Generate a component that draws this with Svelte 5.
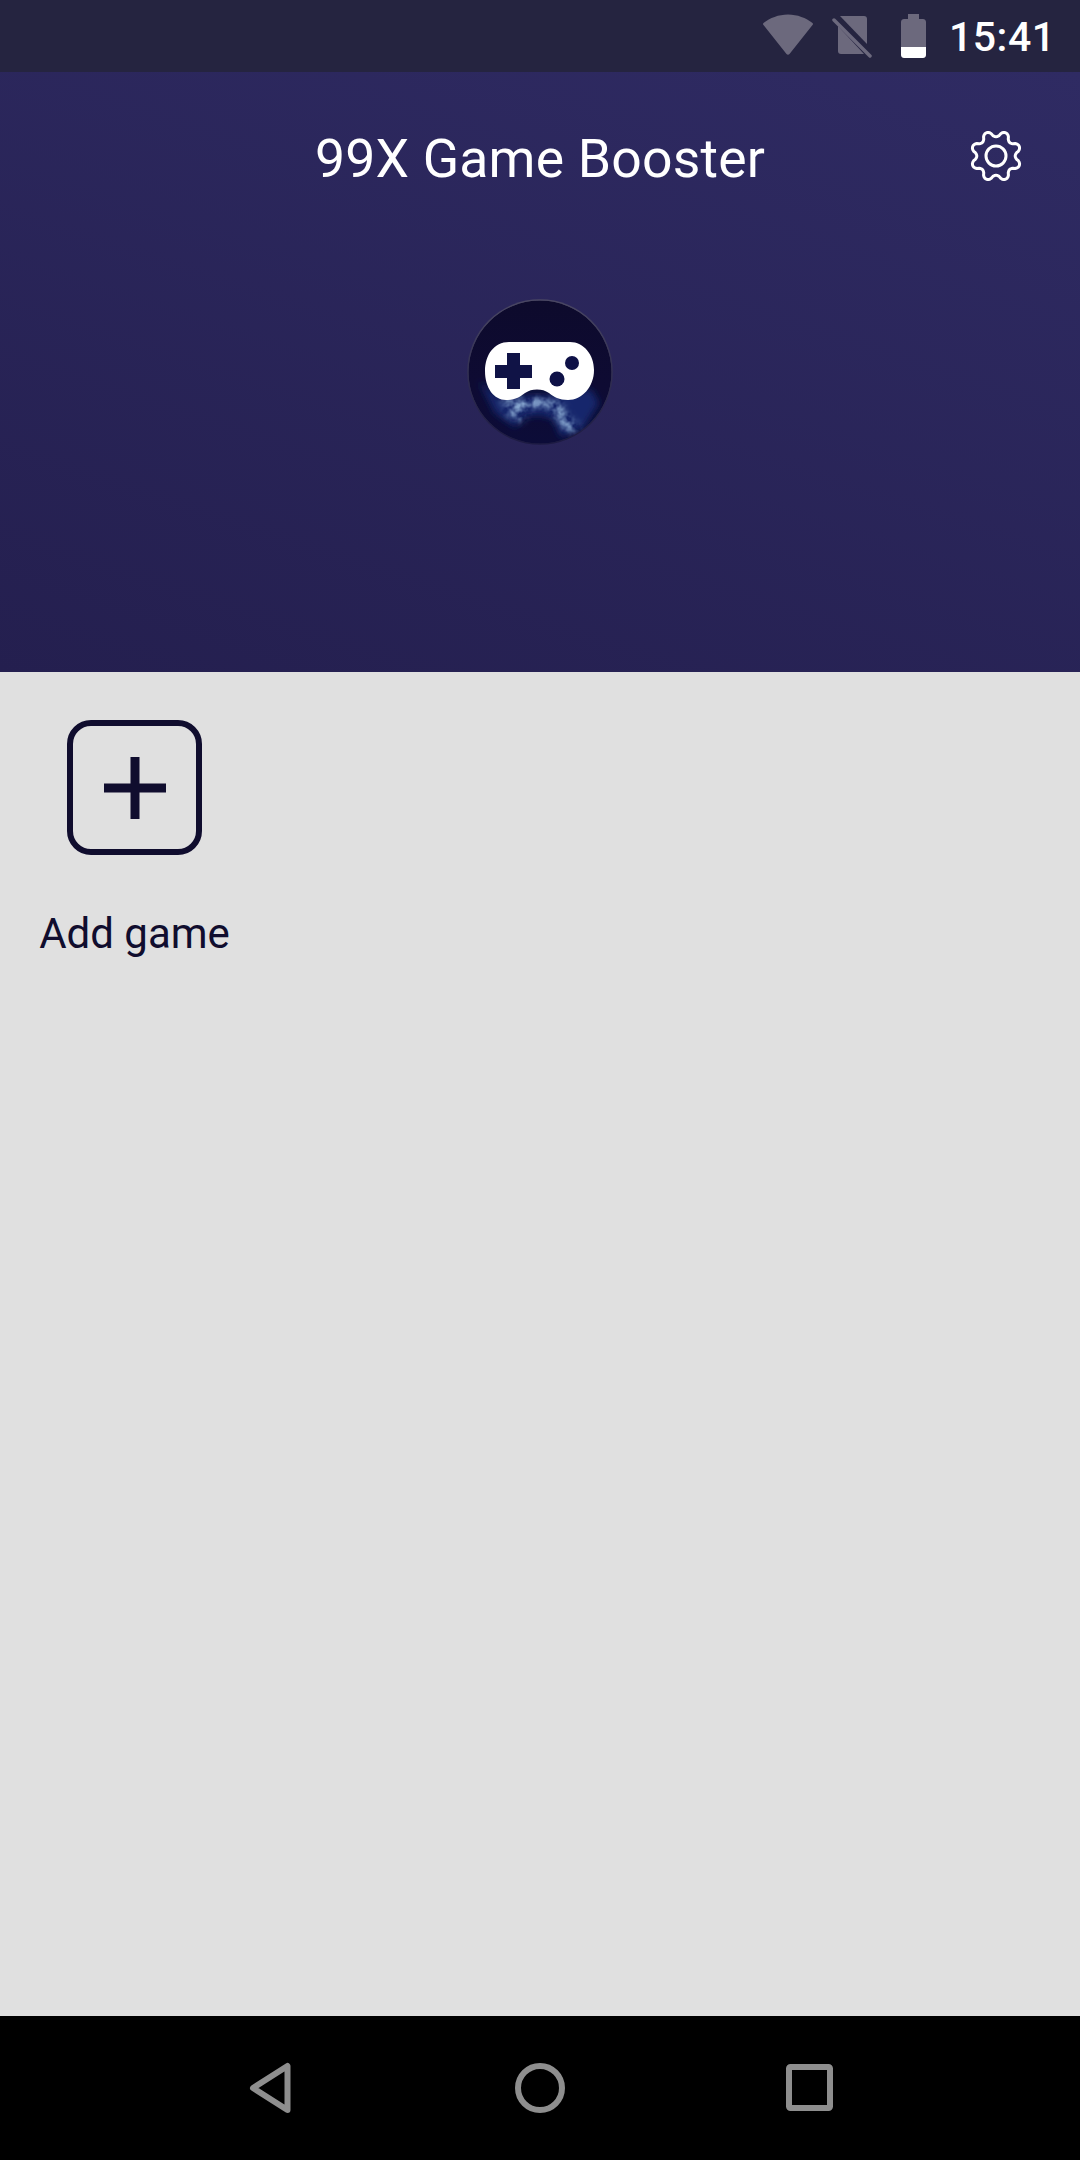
<script>
  const cx = 30, cy = 30;
  let gear = '';
  for (let i = 0; i <= 360; i += 3) {
    const t = (i * Math.PI) / 180;
    const c = Math.cos(8 * (t - Math.PI / 8));
    const r = 22.2 + 3 * Math.sign(c) * Math.pow(Math.abs(c), 0.7);
    const x = cx + r * Math.sin(t);
    const y = cy - r * Math.cos(t);
    gear += (i === 0 ? 'M' : 'L') + x.toFixed(2) + ' ' + y.toFixed(2);
  }
  gear += 'Z';
</script>

<div class="screen">
  <div class="status">
    <svg class="wifi" width="52" height="42" viewBox="0 0 52 42">
      <path d="M1.500 9c6.500-5 15-8.500 24.500-8.500S44 4 50.500 9c.6.5.6 1.300.2 1.800L27.500 40c-.8 1-2.200 1-3 0L1.300 10.800c-.4-.5-.4-1.300.2-1.800z" />
    </svg>
    <svg class="sim" width="40" height="44" viewBox="0 0 40 44">
      <path d="M8 2h24c2 0 3 1 3 3v25z" />
      <path d="M6 12l26 28H9c-2 0-3-1-3-3z" />
      <path d="M2 6l36 36" class="slash" />
    </svg>
    <svg class="batt" width="25" height="44" viewBox="0 0 25 44">
      <path d="M7 0h11v5h4c1.500 0 3 1 3 3v25H0V8c0-2 1.500-3 3-3h4z" fill="#6c697d" />
      <path d="M0 33h25v8c0 2-1.500 3-3 3H3c-1.500 0-3-1-3-3z" fill="#fff" />
    </svg>
    <span class="time">15:41</span>
  </div>

  <header class="hero">
    <div class="titlebar">
      <h1>99X Game Booster</h1>
      <svg class="gear" width="60" height="60" viewBox="0 0 60 60">
        <path d={gear} />
        <circle cx="30" cy="30" r="10" />
      </svg>
    </div>
    <svg class="logo" width="146" height="146" viewBox="0 0 146 146">
      <defs>
        <clipPath id="disc"><circle cx="73" cy="73" r="71.500" /></clipPath>
        <filter id="soft" x="-20%" y="-20%" width="140%" height="140%"><feGaussianBlur stdDeviation="3.500" /></filter>
        <filter id="cloud" x="-10%" y="-10%" width="120%" height="120%">
          <feTurbulence type="fractalNoise" baseFrequency="0.09" numOctaves="3" seed="7" result="n" />
          <feColorMatrix in="n" type="matrix" values="0 0 0 0 0.24  0 0 0 0 0.38  0 0 0 0 0.62  0 0 0 2.200 -0.700" result="c" />
          <feGaussianBlur in="SourceGraphic" stdDeviation="3.500" result="b" />
          <feComposite in="c" in2="b" operator="in" />
        </filter>
        <linearGradient id="discfill" x1="0" y1="0" x2="0" y2="1">
          <stop offset="0" stop-color="#0d0a2c" />
          <stop offset="0.600" stop-color="#0e0b33" />
          <stop offset="1" stop-color="#0c0c38" />
        </linearGradient>
        <linearGradient id="rim" x1="0" y1="0" x2="0" y2="1">
          <stop offset="0" stop-color="#4a4763" />
          <stop offset="1" stop-color="#1c1a42" />
        </linearGradient>
      </defs>
      <circle cx="73" cy="73" r="72.800" fill="url(#rim)" />
      <g clip-path="url(#disc)">
        <circle cx="73" cy="73" r="71.500" fill="url(#discfill)" />
        <path d="M12 82l20 16 30-2 30 0 32-6 8 14-16 26-22 8-8-18-14-4-14 2-10 10-20-14z" fill="#12286c" filter="url(#soft)" />
        <path d="M34 100l28-2 30 2 12 18 10 10-12 8-12-14-10-14-18 2-8 14-14-8z" fill="#8aa0c8" filter="url(#cloud)" />
      </g>
      <path d="M42 43h61c14 0 24 13 24 28 0 17-12 30-26 30-9 0-14-3-19-7-4-2.500-7-3.500-12-3.500s-8 1-12 3.500c-5 4-10 7-19 7-12 0-21-12-21-29 0-16 9-29 24-29z" fill="#fff" />
      <path d="M40 54h13v12h12v13H53v11H40V79H28V66h12z" fill="#101346" />
      <circle cx="105" cy="64" r="7" fill="#0e1147" />
      <circle cx="90" cy="80" r="7.500" fill="#0e1147" />
    </svg>
  </header>

  <main class="grid">
    <button class="add">
      <span class="tile">
        <svg width="62" height="62" viewBox="0 0 62 62"><path d="M26.500 0h9v26.500H62v9H35.500V62h-9V35.500H0v-9h26.500z" /></svg>
      </span>
      <span class="label">Add game</span>
    </button>
  </main>

  <nav class="navbar">
    <svg class="n-back" width="44" height="52" viewBox="0 0 44 52"><path d="M38.500 4v44L4 26z" /></svg>
    <svg class="n-home" width="50" height="50" viewBox="0 0 50 50"><circle cx="25" cy="25" r="22" /></svg>
    <svg class="n-rec" width="48" height="48" viewBox="0 0 48 48"><rect x="3" y="3" width="41" height="41" rx="1.500" /></svg>
  </nav>
</div>

<style>
  :global(body) {
    margin: 0;
    background: #e0e0e0;
  }
  .screen {
    width: 1080px;
    height: 2160px;
    display: flex;
    flex-direction: column;
    overflow: hidden;
    font-family: Roboto, "Noto Sans", sans-serif;
  }
  .status {
    height: 72px;
    flex: none;
    background: #252440;
    display: flex;
    align-items: flex-start;
    box-sizing: border-box;
    padding-left: 762px;
  }
  .wifi {
    margin-top: 14px;
    margin-right: 18px;
    fill: #6c697d;
  }
  .sim {
    margin-top: 14px;
    margin-right: 29px;
    fill: #6c697d;
  }
  .slash {
    fill: none;
    stroke: #6c697d;
    stroke-width: 3.500;
    stroke-linecap: round;
  }
  .batt {
    margin-top: 14px;
    margin-right: 23px;
  }
  .time {
    color: #fff;
    font-size: 41px;
    font-weight: 500;
    letter-spacing: 0.5px;
    line-height: 74px;
  }
  .hero {
    height: 600px;
    flex: none;
    background: linear-gradient(198deg, #2f2b63 0%, #241f4f 100%);
    display: flex;
    flex-direction: column;
    align-items: center;
  }
  .titlebar {
    width: 100%;
    height: 170px;
    position: relative;
    display: flex;
    justify-content: center;
    box-sizing: border-box;
    padding-top: 57px;
    flex: none;
  }
  h1 {
    margin: 0;
    color: #fff;
    font-size: 53.500px;
    font-weight: 400;
    line-height: 60px;
    letter-spacing: 0.2px;
  }
  .gear {
    position: absolute;
    left: 966px;
    top: 54px;
    fill: none;
    stroke: #fff;
    stroke-width: 3;
    stroke-linejoin: round;
  }
  .logo {
    margin-top: 57px;
  }
  .grid {
    flex: 1;
    background: #e0e0e0;
    padding: 48px 0 0 0;
  }
  .add {
    display: flex;
    flex-direction: column;
    align-items: center;
    width: 269px;
    padding: 0;
    border: 0;
    background: none;
    font-family: inherit;
  }
  .tile {
    width: 135px;
    height: 135px;
    box-sizing: border-box;
    border: 6px solid #100d2e;
    border-radius: 24px;
    display: flex;
    align-items: center;
    justify-content: center;
    fill: #100d2e;
  }
  .label {
    margin-top: 55px;
    font-size: 42px;
    line-height: 48px;
    color: #100d2e;
  }
  .navbar {
    height: 144px;
    flex: none;
    background: #000;
    display: flex;
    align-items: center;
    box-sizing: border-box;
    padding: 0 0 1px 249px;
    fill: none;
    stroke: #8e8e8e;
    stroke-width: 6;
    stroke-linejoin: round;
  }
  .n-back {
    margin-right: 222px;
  }
  .n-rec {
    margin-left: 221px;
  }
</style>
